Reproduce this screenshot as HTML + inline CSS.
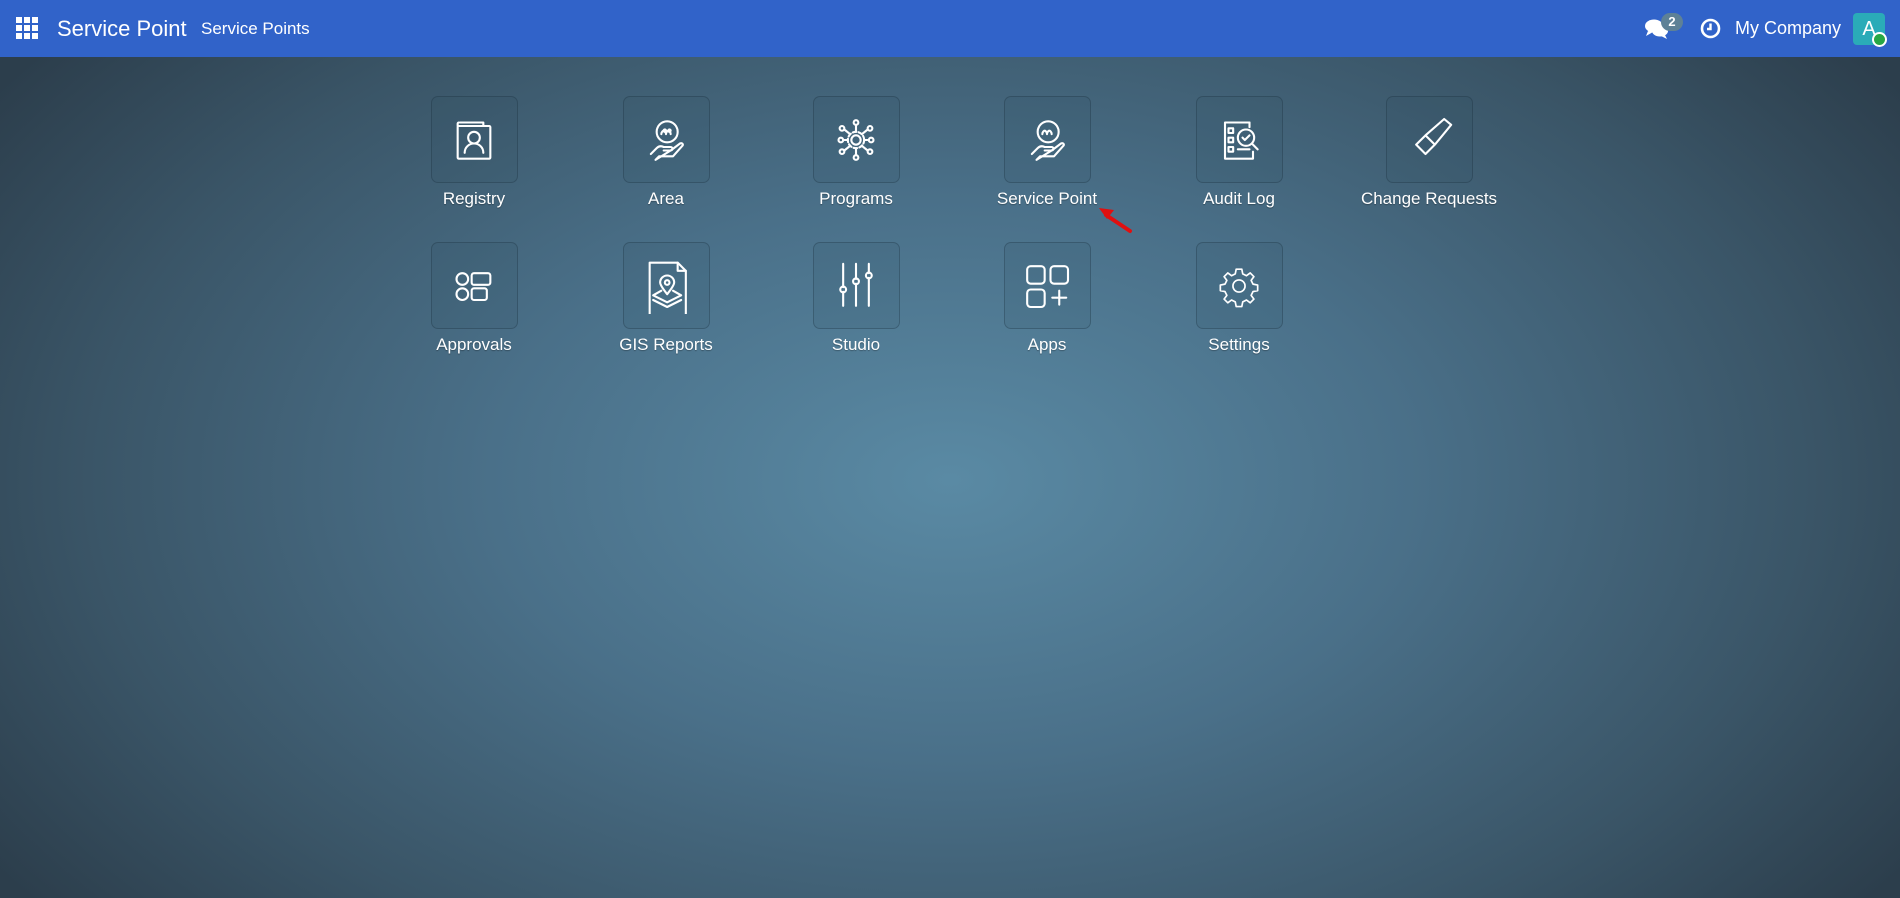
<!DOCTYPE html>
<html><head><meta charset="utf-8"><style>
*{margin:0;padding:0;box-sizing:border-box}
body{width:1900px;height:898px;overflow:hidden;font-family:"Liberation Sans",sans-serif;
background:radial-gradient(ellipse 1150px 700px at 950px 480px,#5a8aa4 0%,#4a7089 40%,#3a5567 75%,#2c3e4c 100%);position:relative}
.nav{position:absolute;left:0;top:0;width:1900px;height:57px;background:#3163c9;color:#fff}
.nav .t{position:absolute;top:0;line-height:57px;white-space:nowrap}
.app{position:absolute;width:140px;text-align:center;color:#fff;font-size:17px}
.box{width:87px;height:87px;margin:0 auto;border:1.5px solid rgba(20,40,55,.28);border-radius:7px;background:rgba(40,70,90,.12);display:flex;align-items:center;justify-content:center}
.box svg{width:56px;height:56px;fill:none;stroke:#fff;stroke-width:1.8;stroke-linejoin:round;stroke-linecap:round}
.lbl{margin-top:6px;text-shadow:0 1px 1px rgba(0,0,0,.3)}
</style></head><body>
<div class="nav">
 <svg style="position:absolute;left:16px;top:17px" width="22" height="22" viewBox="0 0 22 22" fill="#fff">
  <rect x="0" y="0" width="6" height="6"/><rect x="8" y="0" width="6" height="6"/><rect x="16" y="0" width="6" height="6"/>
  <rect x="0" y="8" width="6" height="6"/><rect x="8" y="8" width="6" height="6"/><rect x="16" y="8" width="6" height="6"/>
  <rect x="0" y="16" width="6" height="6"/><rect x="8" y="16" width="6" height="6"/><rect x="16" y="16" width="6" height="6"/></svg>
 <div class="t" style="left:57px;font-size:22px">Service Point</div>
 <div class="t" style="left:201px;font-size:17px">Service Points</div>
 <svg style="position:absolute;left:1644px;top:18px" width="26" height="22" viewBox="0 0 26 22" fill="#fff">
  <ellipse cx="10" cy="8" rx="9" ry="6.5"/><path d="M4 13 L2 18 L9 14Z"/>
  <ellipse cx="16" cy="13" rx="8" ry="5.5"/><path d="M21 17 L23 21 L17 18Z"/></svg>
 <div style="position:absolute;left:1661px;top:13px;width:22px;height:18px;border-radius:9px;background:#5e8196;color:#fff;font-size:13px;font-weight:bold;text-align:center;line-height:18px">2</div>
 <svg style="position:absolute;left:1700px;top:18px" width="21" height="21" viewBox="0 0 21 21"><circle cx="10.5" cy="10.5" r="8.5" fill="none" stroke="#fff" stroke-width="2.6"/><path d="M10.5 5.5V11H7" fill="none" stroke="#fff" stroke-width="2.4"/></svg>
 <div class="t" style="left:1735px;font-size:18px">My Company</div>
 <div style="position:absolute;left:1853px;top:13px;width:32px;height:32px;border-radius:4px;background:#2aabb8;color:#fff;font-size:20px;text-align:center;line-height:32px">A</div>
 <div style="position:absolute;left:1872px;top:32px;width:15px;height:15px;border-radius:50%;background:#28a745;border:2px solid #fff"></div>
</div>

<div class="app" style="left:404px;top:96px"><div class="box"><svg viewBox="0 0 48 48"><path d="M12 9h20v3"/><rect x="10" y="12" width="28" height="28" rx="1"/><path d="M10 12v-2a1 1 0 011-1"/><circle cx="24" cy="22" r="5"/><path d="M16 35c0-5 4-8 8-8s8 3 8 8"/></svg></div><div class="lbl">Registry</div></div>
<div class="app" style="left:596px;top:96px"><div class="box"><svg viewBox="0 0 48 48"><circle cx="25" cy="17" r="9"/><path d="M20 19c0-2 1.5-3 2-3s2 1 2 3M24 19c0-2 1.5-3 2-3s2 1 2 3M22 16a1 1 0 100-.1M26 16a1 1 0 100-.1"/><path d="M11 36l5-5c2-2 4-2 6-1h6c2 0 2 3 0 3h-6M28 33l8-6c2-1 3 1 2 2l-8 9H18l-3 3z"/></svg></div><div class="lbl">Area</div></div>
<div class="app" style="left:786px;top:96px"><div class="box"><svg viewBox="0 0 48 48"><circle cx="24" cy="24" r="4"/><circle cx="24" cy="24" r="7" stroke-dasharray="3 2"/><path d="M24 17v-6M24 31v6M17 24h-3M31 24h3M19 19l-5-4M29 19l5-4M19 29l-5 4M29 29l5 4"/><circle cx="24" cy="9" r="2"/><circle cx="24" cy="39" r="2"/><circle cx="12" cy="14" r="2"/><circle cx="36" cy="14" r="2"/><circle cx="12" cy="34" r="2"/><circle cx="36" cy="34" r="2"/><circle cx="11" cy="24" r="2"/><circle cx="37" cy="24" r="2"/></svg></div><div class="lbl">Programs</div></div>
<div class="app" style="left:977px;top:96px"><div class="box"><svg viewBox="0 0 48 48"><circle cx="25" cy="17" r="9"/><path d="M20 19c0-2 1.5-3 2-3s2 1 2 3M24 19c0-2 1.5-3 2-3s2 1 2 3"/><path d="M11 36l5-5c2-2 4-2 6-1h6c2 0 2 3 0 3h-6M28 33l8-6c2-1 3 1 2 2l-8 9H18l-3 3z"/></svg></div><div class="lbl">Service Point</div></div>
<div class="app" style="left:1169px;top:96px"><div class="box"><svg viewBox="0 0 48 48"><path d="M33 9h-21v31h24v-6"/><path d="M33 9v4"/><rect x="15" y="14" width="4" height="4"/><rect x="15" y="22" width="4" height="4"/><rect x="15" y="30" width="4" height="4"/><path d="M23 32h10"/><circle cx="30" cy="22" r="7"/><path d="M27 22l2 2 4-4M35 27l5 5"/></svg></div><div class="lbl">Audit Log</div></div>
<div class="app" style="left:1359px;top:96px"><div class="box"><svg viewBox="0 0 48 48"><path d="M13 28l8-8 8 8-8 8zM21 20l8 8 14-17-6-5-16 14"/></svg></div><div class="lbl">Change Requests</div></div>

<div class="app" style="left:404px;top:242px"><div class="box"><svg viewBox="0 0 48 48"><circle cx="14" cy="18" r="5"/><circle cx="14" cy="31" r="5"/><rect x="22" y="13" width="16" height="10" rx="2"/><rect x="22" y="26" width="13" height="10" rx="2"/></svg></div><div class="lbl">Approvals</div></div>
<div class="app" style="left:596px;top:242px"><div class="box"><svg viewBox="0 0 48 48"><path d="M10 4h24l7 7v38H10z"/><path d="M34 4v7h7"/><path d="M25 31c-4-5-6-8-6-10a6 6 0 0112 0c0 2-2 5-6 10z"/><circle cx="25" cy="21" r="2"/><path d="M20 28l-7 4 12 6 12-6-7-4M13 36l12 6 12-6"/></svg></div><div class="lbl">GIS Reports</div></div>
<div class="app" style="left:786px;top:242px"><div class="box"><svg viewBox="0 0 48 48"><path d="M13 5v20M13 29v12M24 5v13M24 22v19M35 5v8M35 17v24"/><circle cx="13" cy="27" r="2.5"/><circle cx="24" cy="20" r="2.5"/><circle cx="35" cy="15" r="2.5"/></svg></div><div class="lbl">Studio</div></div>
<div class="app" style="left:977px;top:242px"><div class="box"><svg viewBox="0 0 48 48"><rect x="7" y="7" width="15" height="15" rx="3"/><rect x="27" y="7" width="15" height="15" rx="3"/><rect x="7" y="27" width="15" height="15" rx="3"/><path d="M34.5 28v12M28.5 34h12"/></svg></div><div class="lbl">Apps</div></div>
<div class="app" style="left:1169px;top:242px"><div class="box"><svg viewBox="-6 -6 60 60"><path d="M21 6h6l1 5 4 2 4-3 4 4-3 4 2 4 5 1v6l-5 1-2 4 3 4-4 4-4-3-4 2-1 5h-6l-1-5-4-2-4 3-4-4 3-4-2-4-5-1v-6l5-1 2-4-3-4 4-4 4 3 4-2z"/><circle cx="24" cy="24" r="6.5"/></svg></div><div class="lbl">Settings</div></div>

<svg style="position:absolute;left:1090px;top:200px" width="50" height="40" viewBox="0 0 50 40"><path d="M40 31L16 15" stroke="#e01010" stroke-width="4" stroke-linecap="round"/><path d="M9 8l15 2-7 9z" fill="#e01010"/></svg>
</body></html>
